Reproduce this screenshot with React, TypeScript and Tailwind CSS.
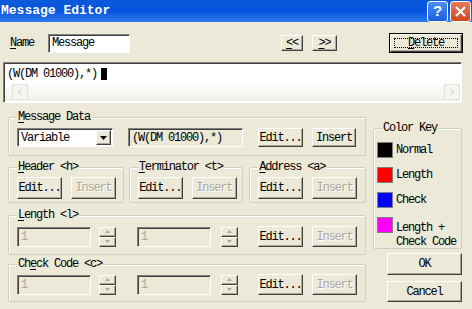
import React from "react"

const mono = "font-['Liberation_Mono',monospace] text-[12px] leading-[14px] tracking-[-1.2px] text-black"

function U({ children }: { children: React.ReactNode }) {
  return <span className="underline underline-offset-[2px]">{children}</span>
}

function Btn({ children, className = "", disabled = false }: { children: React.ReactNode; className?: string; disabled?: boolean }) {
  return (
    <div className={`relative flex items-center justify-center bg-[#ece9d8] border border-t-white border-l-white border-r-[#404040] border-b-[#404040] shadow-[inset_-1px_-1px_0_#aca899] ${className}`}>
      <span className={disabled ? "text-[#aca899] [text-shadow:1px_1px_0_#fff]" : ""}>{children}</span>
    </div>
  )
}

function Field({ children, className = "", white = false }: { children?: React.ReactNode; className?: string; white?: boolean }) {
  return (
    <div className={`flex items-center pl-[3px] border border-t-[#808080] border-l-[#808080] border-r-white border-b-white shadow-[inset_1px_1px_0_#404040] ${white ? "bg-white" : "bg-[#ece9d8]"} ${className}`}>
      {children}
    </div>
  )
}

function Spin() {
  const half = "flex-1 flex items-center justify-center bg-[#ece9d8] border border-t-white border-l-white border-r-[#404040] border-b-[#404040] shadow-[inset_-1px_-1px_0_#aca899]"
  return (
    <div className="flex flex-col w-[17px] h-[20px]">
      <div className={half}>
        <svg width="5" height="3"><path d="M2.5 0L5 3H0z" fill="#aca899" /></svg>
      </div>
      <div className={half}>
        <svg width="5" height="3"><path d="M0 0H5L2.5 3z" fill="#aca899" /></svg>
      </div>
    </div>
  )
}

function Group({ label, className = "", children }: { label: React.ReactNode; className?: string; children?: React.ReactNode }) {
  return (
    <div className={`relative border border-[#d0d0bf] rounded-[2px] shadow-[inset_1px_1px_0_#fff] ${className}`}>
      <div className="absolute -top-[8px] left-[8px] px-[1px] bg-[#ece9d8]">{label}</div>
      {children}
    </div>
  )
}

function EditInsert({ h = "h-[22px]" }: { h?: string }) {
  return (
    <div className="flex gap-[9px]">
      <Btn className={`w-[45px] ${h}`}>Edit...</Btn>
      <Btn className={`w-[45px] ${h}`} disabled>Insert</Btn>
    </div>
  )
}

function NumberRow() {
  return (
    <div className="flex items-center">
      <Field className="w-[74px] h-[20px] text-[#aca899]">1</Field>
      <div className="ml-[8px]"><Spin /></div>
      <Field className="ml-[21px] w-[74px] h-[20px] text-[#aca899]">1</Field>
      <div className="ml-[10px]"><Spin /></div>
      <div className="ml-[20px]"><EditInsert h="h-[21px]" /></div>
    </div>
  )
}

function Swatch({ color, children }: { color: string; children: React.ReactNode }) {
  return (
    <div className="flex items-start gap-[3px]">
      <div className={`w-[16px] h-[16px] border border-[#808080] ${color}`} />
      <div className="pt-[1px]">{children}</div>
    </div>
  )
}

export default function App() {
  return (
    <div className={`w-[472px] h-[309px] bg-[#ece9d8] overflow-hidden ${mono}`}>
      {/* Title bar */}
      <div className="h-[22px] flex items-center justify-between bg-gradient-to-b from-[#0b5ad9] via-[#0553e0] to-[#2f7bea]">
        <span className="pl-[1px] font-bold text-[13px] tracking-[0px] text-white">Message Editor</span>
        <div className="flex gap-[2px] pr-[1px]">
          <div className="w-[21px] h-[21px] rounded-[3px] border border-white bg-gradient-to-b from-[#4d8ff5] to-[#1a5ee0] flex items-center justify-center">
            <span className="font-['Liberation_Sans',sans-serif] font-bold text-[15px] text-white tracking-[0px]">?</span>
          </div>
          <div className="w-[21px] h-[21px] rounded-[3px] border border-white bg-gradient-to-b from-[#e8785a] to-[#d0471e] flex items-center justify-center">
            <svg width="11" height="11" viewBox="0 0 11 11"><path d="M1 1L10 10M10 1L1 10" stroke="#fff" strokeWidth="2.2" /></svg>
          </div>
        </div>
      </div>

      <div className="pl-[8px]">
        {/* Name row */}
        <div className="mt-[11px] flex items-center h-[20px]">
          <span className="w-[40px] pl-[2px]"><U>N</U>ame</span>
          <Field white className="w-[82px] h-[19px]">Message</Field>
          <Btn className="ml-[151px] w-[22px] h-[16px]"><U>&lt;</U>&lt;</Btn>
          <Btn className="ml-[9px] w-[25px] h-[16px]"><U>&gt;</U>&gt;</Btn>
          <div className="ml-[52px] w-[74px] h-[20px] border border-black">
            <Btn className="w-full h-full">
              <span className="absolute inset-[3px] border border-dotted border-black" />
              <U>D</U>elete
            </Btn>
          </div>
        </div>

        {/* Message text box */}
        <div className="mt-[9px] -ml-[5px] w-[459px] h-[41px] flex flex-col bg-white border border-t-[#808080] border-l-[#808080] border-r-white border-b-white shadow-[inset_1px_1px_0_#404040]">
          <div className="h-[20px] flex items-center pl-[3px] pt-[1px]">
            <span>(W(DM 01000),*)</span>
            <span className="ml-[4px] w-[6px] h-[12px] bg-black" />
          </div>
          <div className="mt-auto h-[17px] mx-[1px] mb-[1px] flex justify-between bg-gradient-to-b from-[#fefefe] to-[#f0efe8]">
            <div className="w-[16px] h-[16px] ml-[7px] flex items-center justify-center border border-[#e4e3dc] bg-[#f6f5f0]">
              <svg width="4" height="7"><path d="M3.5 0.5L0.5 3.5L3.5 6.5" stroke="#c9c7ba" fill="none" /></svg>
            </div>
            <div className="w-[16px] h-[16px] flex items-center justify-center border border-[#e4e3dc] bg-[#f6f5f0]">
              <svg width="4" height="7"><path d="M0.5 0.5L3.5 3.5L0.5 6.5" stroke="#c9c7ba" fill="none" /></svg>
            </div>
          </div>
        </div>

        <div className="mt-[14px] flex">
          {/* Left column */}
          <div className="w-[358px] flex flex-col">
            <Group label={<span><U>M</U>essage Data</span>} className="h-[39px]">
              <div className="pt-[10px] pl-[8px] flex items-center">
                <div className="w-[96px] h-[19px] flex bg-white border border-t-[#808080] border-l-[#808080] border-r-white border-b-white shadow-[inset_1px_1px_0_#404040]">
                  <span className="flex-1 pl-[3px] pt-[2px]">Variable</span>
                  <div className="w-[15px] h-[15px] mt-[1px] mr-[1px] flex items-center justify-center bg-[#ece9d8] border border-t-white border-l-white border-r-[#404040] border-b-[#404040] shadow-[inset_-1px_-1px_0_#aca899]">
                    <svg width="7" height="4"><path d="M0 0H7L3.5 4z" fill="#000" /></svg>
                  </div>
                </div>
                <Field className="ml-[15px] w-[115px] h-[19px]">(W(DM 01000),*)</Field>
                <div className="ml-[15px]">
                  <div className="flex gap-[9px]">
                    <Btn className="w-[45px] h-[19px]">Edit...</Btn>
                    <Btn className="w-[44px] h-[19px]">Insert</Btn>
                  </div>
                </div>
              </div>
            </Group>

            <div className="mt-[11px] flex gap-[5px]">
              <Group label={<span><U>H</U>eader &lt;h&gt;</span>} className="w-[116px] h-[36px]">
                <div className="pt-[9px] pl-[8px]"><EditInsert /></div>
              </Group>
              <Group label={<span><U>T</U>erminator &lt;t&gt;</span>} className="w-[115px] h-[36px]">
                <div className="pt-[9px] pl-[8px]"><EditInsert /></div>
              </Group>
              <Group label={<span><U>A</U>ddress &lt;a&gt;</span>} className="ml-[1px] w-[117px] h-[36px]">
                <div className="pt-[9px] pl-[8px]"><EditInsert /></div>
              </Group>
            </div>

            <Group label={<span><U>L</U>ength &lt;l&gt;</span>} className="mt-[12px] h-[40px]">
              <div className="pt-[10px] pl-[8px]"><NumberRow /></div>
            </Group>

            <Group label={<span>Ch<U>e</U>ck Code &lt;c&gt;</span>} className="mt-[9px] h-[38px]">
              <div className="pt-[9px] pl-[8px]"><NumberRow /></div>
            </Group>
          </div>

          {/* Right column */}
          <div className="ml-[7px] w-[89px] flex flex-col">
            <Group label="Color Key" className="mt-[11px] h-[121px]">
              <div className="pt-[13px] pl-[3px] flex flex-col gap-[9px]">
                <Swatch color="bg-black">Normal</Swatch>
                <Swatch color="bg-[#ff0000]">Length</Swatch>
                <Swatch color="bg-[#0000ff]">Check</Swatch>
                <Swatch color="bg-[#ff00ff]">
                  <div className="pt-[3px]">Length +</div>
                  <div>Check Code</div>
                </Swatch>
              </div>
            </Group>
            <Btn className="mt-[4px] w-[75px] ml-[14px] h-[22px]">OK</Btn>
            <Btn className="mt-[6px] w-[75px] ml-[14px] h-[21px]">Cancel</Btn>
          </div>
        </div>
      </div>
    </div>
  )
}
